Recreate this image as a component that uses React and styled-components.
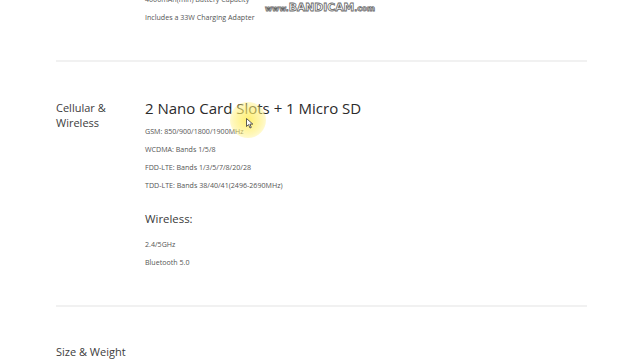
import React from "react";
import styled, { createGlobalStyle } from "styled-components";

const Global = createGlobalStyle`
  html, body { margin: 0; padding: 0; background: #ffffff; overflow: hidden; }
  body { font-family: "Open Sans", "Noto Sans", sans-serif; width: 640px; height: 360px; }
`;

const Page = styled.div`
  position: relative;
  width: 640px;
  height: 360px;
  overflow: hidden;
  background: #fff;
`;

const Container = styled.div`
  margin: -10px 0 0 56px;
  width: 531px;
`;

const Section = styled.section`
  display: grid;
  grid-template-columns: 89px 1fr;
  padding: ${(p) => p.$pad || "0"};
  border-bottom: ${(p) => (p.$divider ? "2px solid #f1f1f1" : "none")};
`;

const Label = styled.div`
  font-size: 11px;
  line-height: 15px;
  color: #3d3d3d;
  white-space: nowrap;
  padding-top: ${(p) => p.$top || 0}px;
`;

const Content = styled.div`
  display: flex;
  flex-direction: column;
`;

const Heading = styled.h2`
  margin: 0 0 ${(p) => p.$mb || 0}px;
  font-weight: 400;
  font-size: ${(p) => p.$size || 16}px;
  line-height: ${(p) => p.$lh || 22}px;
  color: ${(p) => p.$color || "#2b2b2b"};
`;

const SubHeading = styled(Heading)`
  margin: 16px 0 7px;
`;

const Spec = styled.p`
  margin: 0;
  font-size: 7.1px;
  line-height: 18px;
  color: #555;
  white-space: nowrap;
`;

const Watermark = styled.div`
  position: absolute;
  top: 1px;
  left: 265px;
  font-family: "DejaVu Sans", sans-serif;
  font-weight: 700;
  color: #ffffff;
  -webkit-text-stroke: 0.8px #6a6a6a;
  white-space: nowrap;
  font-size: 7.7px;
  line-height: 14px;
`;

const Big = styled.span`
  font-size: 10.8px;
`;

const Glow = styled.div`
  position: absolute;
  left: 230px;
  top: 102px;
  width: 36px;
  height: 36px;
  border-radius: 50%;
  background: radial-gradient(circle, rgba(255, 236, 90, 0.85) 0%, rgba(255, 240, 120, 0.55) 55%, rgba(255, 245, 150, 0) 100%);
  pointer-events: none;
`;

const Cursor = styled.svg`
  position: absolute;
  left: 246px;
  top: 118px;
`;

export default function App() {
  return (
    <Page>
      <Global />
      <Container>
        <Section $divider $pad="0 0 34px">
          <div />
          <Content>
            <Spec>4000mAh(min) Battery Capacity</Spec>
            <Spec>Includes a 33W Charging Adapter</Spec>
          </Content>
        </Section>
        <Section $divider $pad="35px 0 34px">
          <Label $top={3}>Cellular &amp;<br />Wireless</Label>
          <Content>
            <Heading $size={15} $lh={22} $mb={3}>2 Nano Card Slots + 1 Micro SD</Heading>
            <Spec>GSM: 850/900/1800/1900MHz</Spec>
            <Spec>WCDMA: Bands 1/5/8</Spec>
            <Spec>FDD-LTE: Bands 1/3/5/7/8/20/28</Spec>
            <Spec>TDD-LTE: Bands 38/40/41(2496-2690MHz)</Spec>
            <SubHeading $size={11.4} $lh={18} $color="#3a3a3a">Wireless:</SubHeading>
            <Spec>2.4/5GHz</Spec>
            <Spec>Bluetooth 5.0</Spec>
          </Content>
        </Section>
        <Section $pad="37px 0 0">
          <Label>Size &amp; Weight</Label>
          <div />
        </Section>
      </Container>
      <Watermark>
        www.<Big>BANDICAM</Big>.com
      </Watermark>
      <Glow />
      <Cursor width="8" height="11" viewBox="0 0 8 11">
        <path d="M0.5 0.5 L0.5 8.5 L2.5 6.6 L4 10 L5.3 9.4 L3.9 6.1 L6.8 6.1 Z" fill="#fff" stroke="#333" strokeWidth="0.8" />
      </Cursor>
    </Page>
  );
}
